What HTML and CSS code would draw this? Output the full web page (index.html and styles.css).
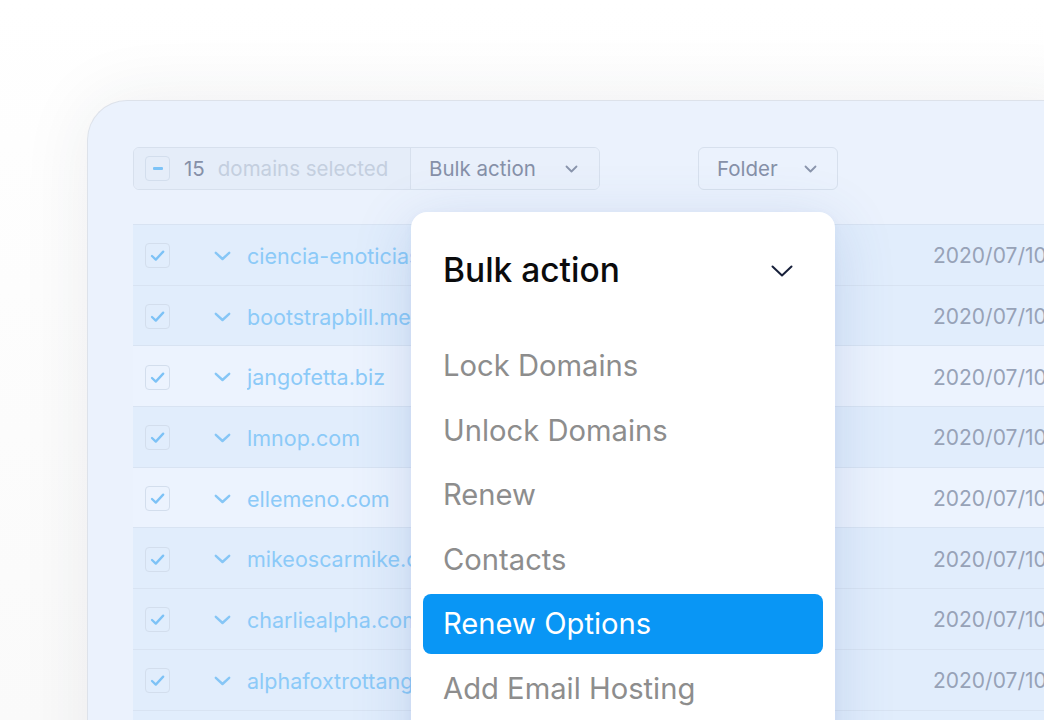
FILE: index.html
```html
<!DOCTYPE html>
<html lang="en">
<head>
<meta charset="utf-8">
<title>Bulk action</title>
<link rel="stylesheet" href="styles.css">
</head>
<body>
<div class="stage">
  <div class="card">
    <div class="toolbar">
      <div class="selgroup">
        <div class="sel">
          <span class="cb cb-minus"><span class="dash"></span></span>
          <span class="count">15</span>
          <span class="seltext">domains selected</span>
        </div>
        <div class="bulk">
          <span>Bulk action</span>
          <svg class="chev-sm" width="13" height="8" viewBox="0 0 13 8"><path d="M1.5 1.5 L6.5 6.5 L11.5 1.5" fill="none" stroke="#8a95ac" stroke-width="1.8" stroke-linecap="round" stroke-linejoin="round"/></svg>
        </div>
      </div>
      <div class="folder">
        <span>Folder</span>
        <svg class="chev-sm" width="13" height="8" viewBox="0 0 13 8"><path d="M1.5 1.5 L6.5 6.5 L11.5 1.5" fill="none" stroke="#8a95ac" stroke-width="1.8" stroke-linecap="round" stroke-linejoin="round"/></svg>
      </div>
    </div>

    <div class="table">
      <div class="row dark">
        <span class="cb"><svg width="25" height="25" viewBox="0 0 25 25"><path d="M7 13 L10.8 16.6 L18.2 8.6" fill="none" stroke="#7dc2f6" stroke-width="2.3" stroke-linecap="round" stroke-linejoin="round"/></svg></span>
        <svg class="chev-row" width="17" height="10" viewBox="0 0 17 10"><path d="M1.8 1.8 L8.5 8 L15.2 1.8" fill="none" stroke="#86c6f6" stroke-width="2.4" stroke-linecap="round" stroke-linejoin="round"/></svg>
        <span class="domain">ciencia-enoticias.com</span>
        <span class="date">2020/07/10</span>
      </div>
      <div class="row dark">
        <span class="cb"><svg width="25" height="25" viewBox="0 0 25 25"><path d="M7 13 L10.8 16.6 L18.2 8.6" fill="none" stroke="#7dc2f6" stroke-width="2.3" stroke-linecap="round" stroke-linejoin="round"/></svg></span>
        <svg class="chev-row" width="17" height="10" viewBox="0 0 17 10"><path d="M1.8 1.8 L8.5 8 L15.2 1.8" fill="none" stroke="#86c6f6" stroke-width="2.4" stroke-linecap="round" stroke-linejoin="round"/></svg>
        <span class="domain">bootstrapbill.me</span>
        <span class="date">2020/07/10</span>
      </div>
      <div class="row light">
        <span class="cb"><svg width="25" height="25" viewBox="0 0 25 25"><path d="M7 13 L10.8 16.6 L18.2 8.6" fill="none" stroke="#7dc2f6" stroke-width="2.3" stroke-linecap="round" stroke-linejoin="round"/></svg></span>
        <svg class="chev-row" width="17" height="10" viewBox="0 0 17 10"><path d="M1.8 1.8 L8.5 8 L15.2 1.8" fill="none" stroke="#86c6f6" stroke-width="2.4" stroke-linecap="round" stroke-linejoin="round"/></svg>
        <span class="domain">jangofetta.biz</span>
        <span class="date">2020/07/10</span>
      </div>
      <div class="row dark">
        <span class="cb"><svg width="25" height="25" viewBox="0 0 25 25"><path d="M7 13 L10.8 16.6 L18.2 8.6" fill="none" stroke="#7dc2f6" stroke-width="2.3" stroke-linecap="round" stroke-linejoin="round"/></svg></span>
        <svg class="chev-row" width="17" height="10" viewBox="0 0 17 10"><path d="M1.8 1.8 L8.5 8 L15.2 1.8" fill="none" stroke="#86c6f6" stroke-width="2.4" stroke-linecap="round" stroke-linejoin="round"/></svg>
        <span class="domain">lmnop.com</span>
        <span class="date">2020/07/10</span>
      </div>
      <div class="row light">
        <span class="cb"><svg width="25" height="25" viewBox="0 0 25 25"><path d="M7 13 L10.8 16.6 L18.2 8.6" fill="none" stroke="#7dc2f6" stroke-width="2.3" stroke-linecap="round" stroke-linejoin="round"/></svg></span>
        <svg class="chev-row" width="17" height="10" viewBox="0 0 17 10"><path d="M1.8 1.8 L8.5 8 L15.2 1.8" fill="none" stroke="#86c6f6" stroke-width="2.4" stroke-linecap="round" stroke-linejoin="round"/></svg>
        <span class="domain">ellemeno.com</span>
        <span class="date">2020/07/10</span>
      </div>
      <div class="row dark">
        <span class="cb"><svg width="25" height="25" viewBox="0 0 25 25"><path d="M7 13 L10.8 16.6 L18.2 8.6" fill="none" stroke="#7dc2f6" stroke-width="2.3" stroke-linecap="round" stroke-linejoin="round"/></svg></span>
        <svg class="chev-row" width="17" height="10" viewBox="0 0 17 10"><path d="M1.8 1.8 L8.5 8 L15.2 1.8" fill="none" stroke="#86c6f6" stroke-width="2.4" stroke-linecap="round" stroke-linejoin="round"/></svg>
        <span class="domain">mikeoscarmike.com</span>
        <span class="date">2020/07/10</span>
      </div>
      <div class="row dark">
        <span class="cb"><svg width="25" height="25" viewBox="0 0 25 25"><path d="M7 13 L10.8 16.6 L18.2 8.6" fill="none" stroke="#7dc2f6" stroke-width="2.3" stroke-linecap="round" stroke-linejoin="round"/></svg></span>
        <svg class="chev-row" width="17" height="10" viewBox="0 0 17 10"><path d="M1.8 1.8 L8.5 8 L15.2 1.8" fill="none" stroke="#86c6f6" stroke-width="2.4" stroke-linecap="round" stroke-linejoin="round"/></svg>
        <span class="domain">charliealpha.com</span>
        <span class="date">2020/07/10</span>
      </div>
      <div class="row dark">
        <span class="cb"><svg width="25" height="25" viewBox="0 0 25 25"><path d="M7 13 L10.8 16.6 L18.2 8.6" fill="none" stroke="#7dc2f6" stroke-width="2.3" stroke-linecap="round" stroke-linejoin="round"/></svg></span>
        <svg class="chev-row" width="17" height="10" viewBox="0 0 17 10"><path d="M1.8 1.8 L8.5 8 L15.2 1.8" fill="none" stroke="#86c6f6" stroke-width="2.4" stroke-linecap="round" stroke-linejoin="round"/></svg>
        <span class="domain">alphafoxtrottango.com</span>
        <span class="date">2020/07/10</span>
      </div>
      <div class="row dark">
        <span class="cb"><svg width="25" height="25" viewBox="0 0 25 25"><path d="M7 13 L10.8 16.6 L18.2 8.6" fill="none" stroke="#7dc2f6" stroke-width="2.3" stroke-linecap="round" stroke-linejoin="round"/></svg></span>
        <svg class="chev-row" width="17" height="10" viewBox="0 0 17 10"><path d="M1.8 1.8 L8.5 8 L15.2 1.8" fill="none" stroke="#86c6f6" stroke-width="2.4" stroke-linecap="round" stroke-linejoin="round"/></svg>
        <span class="domain">deltaecho.net</span>
        <span class="date">2020/07/10</span>
      </div>
    </div>

    <div class="dropdown">
      <div class="dd-head">
        <span>Bulk action</span>
        <svg width="22" height="12" viewBox="0 0 22 12"><path d="M1.5 1.5 L11 10.5 L20.5 1.5" fill="none" stroke="#17203a" stroke-width="2" stroke-linecap="round" stroke-linejoin="round"/></svg>
      </div>
      <ul class="dd-list">
        <li class="dd-item">Lock Domains</li>
        <li class="dd-item">Unlock Domains</li>
        <li class="dd-item">Renew</li>
        <li class="dd-item">Contacts</li>
        <li class="dd-item active">Renew Options</li>
        <li class="dd-item">Add Email Hosting</li>
      </ul>
    </div>
  </div>
</div>
</body>
</html>
```

FILE: styles.css
```css
* { box-sizing: border-box; }

html, body {
  margin: 0;
  padding: 0;
  background: #ffffff;
}

body {
  width: 1044px;
  height: 720px;
  overflow: hidden;
  font-family: Inter, "Noto Sans", "Liberation Sans", sans-serif;
}

.stage {
  width: 1044px;
  height: 720px;
  overflow: hidden;
  padding: 100px 0 0 87px;
  background: linear-gradient(180deg, #ffffff 0%, #fafafa 100%);
}

.card {
  position: relative;
  width: 1000px;
  height: 720px;
  background: #ebf2fd;
  border: 1px solid #dde2ea;
  border-right: none;
  border-bottom: none;
  border-radius: 40px 0 0 0;
  padding: 46px 0 0 45px;
  box-shadow: 0 0 70px rgba(40, 50, 70, 0.08);
}

/* toolbar */
.toolbar {
  display: flex;
  align-items: center;
  height: 43px;
}

.selgroup {
  display: flex;
  width: 467px;
  height: 43px;
  border: 1px solid #d7e0ed;
  border-radius: 6px;
  overflow: hidden;
}

.sel {
  display: flex;
  align-items: center;
  width: 277px;
  padding-left: 11px;
  background: #e5edf9;
  border-right: 1px solid #d7e0ed;
  font-size: 20.5px;
}

.cb {
  display: inline-flex;
  align-items: center;
  justify-content: center;
  width: 25px;
  height: 25px;
  flex: 0 0 25px;
  border: 1.5px solid #d3deed;
  border-radius: 4px;
}

.cb svg { display: block; margin: -1.5px; }

.dash {
  width: 10px;
  height: 2.5px;
  border-radius: 1px;
  background: #7dc3f7;
}

.count {
  margin-left: 14px;
  color: #8690a8;
}

.seltext {
  margin-left: 13px;
  color: #c4cfdf;
}

.bulk {
  display: flex;
  align-items: center;
  justify-content: space-between;
  flex: 1;
  padding: 0 21px 0 18px;
  background: #e9f0fb;
  color: #8690a8;
  font-size: 20.5px;
}

.folder {
  display: flex;
  align-items: center;
  justify-content: space-between;
  width: 140px;
  height: 43px;
  margin-left: 98px;
  padding: 0 20px 0 18px;
  border: 1px solid #d7e0ed;
  border-radius: 6px;
  color: #8690a8;
  font-size: 20.5px;
}

.chev-sm { display: block; }

/* table */
.table {
  margin-top: 34px;
  width: 1000px;
  border-top: 1px solid #d8e3f2;
}

.row {
  display: flex;
  align-items: center;
  height: 60.7px;
  border-bottom: 1px solid #d8e3f2;
  padding-left: 12px;
  padding-top: 2px;
}

.row.dark { background: #e1edfc; }
.row.light { background: #ecf3fe; }

.chev-row {
  display: block;
  margin-left: 44px;
  flex: 0 0 17px;
}

.domain {
  width: 686px;
  margin-left: 16px;
  font-size: 21.5px;
  color: #8ccaf8;
  white-space: nowrap;
  overflow: hidden;
}

.date {
  font-size: 21px;
  color: #97a2b7;
  white-space: nowrap;
}

/* dropdown menu overlay */
.dropdown {
  position: absolute;
  left: 323px;
  top: 111px;
  width: 424px;
  height: 640px;
  background: #ffffff;
  border-radius: 16px;
  padding: 0 12px;
  box-shadow: 0 12px 60px rgba(60, 100, 170, 0.18), 0 2px 8px rgba(60, 100, 170, 0.05);
}

.dd-head {
  display: flex;
  align-items: center;
  justify-content: space-between;
  height: 116px;
  padding: 0 30px 0 20px;
  font-size: 33.5px;
  font-weight: 500;
  color: #0b0b0c;
}

.dd-head svg { display: block; margin-top: 2px; }

.dd-list {
  list-style: none;
  margin: 7.5px 0 0;
  padding: 0;
  display: flex;
  flex-direction: column;
  gap: 4.6px;
}

.dd-item {
  display: flex;
  align-items: center;
  height: 60px;
  padding-left: 20px;
  border-radius: 8px;
  font-size: 29.2px;
  color: #8d8d8d;
  white-space: nowrap;
}

.dd-item.active {
  background: #0996f5;
  color: #ffffff;
}
```
